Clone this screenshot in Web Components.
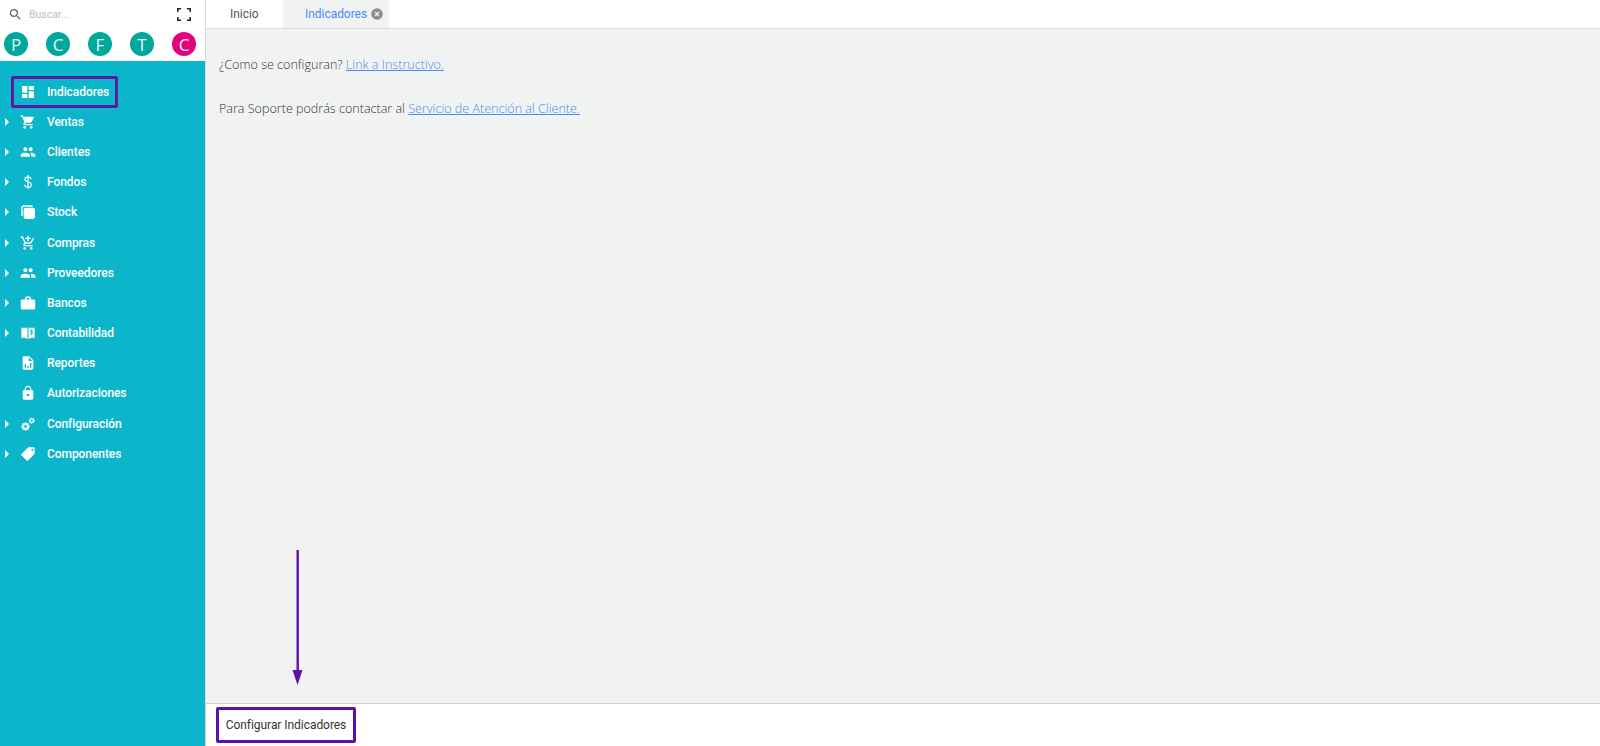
<!DOCTYPE html>
<html lang="es"><head><meta charset="utf-8"><title>Indicadores</title>
<style>
html,body{margin:0;height:100%;overflow:hidden;background:#fff;font-family:Roboto,sans-serif}
</style></head><body>
<app-shell>
  <side-bar slot="side">
    <nav-item label="Indicadores" icon="dash" highlight></nav-item>
    <nav-item label="Ventas" icon="cart" arrow></nav-item>
    <nav-item label="Clientes" icon="people" arrow></nav-item>
    <nav-item label="Fondos" icon="dollar" arrow></nav-item>
    <nav-item label="Stock" icon="stock" arrow></nav-item>
    <nav-item label="Compras" icon="cartplus" arrow></nav-item>
    <nav-item label="Proveedores" icon="people" arrow></nav-item>
    <nav-item label="Bancos" icon="case" arrow></nav-item>
    <nav-item label="Contabilidad" icon="book" arrow></nav-item>
    <nav-item label="Reportes" icon="report"></nav-item>
    <nav-item label="Autorizaciones" icon="lock"></nav-item>
    <nav-item label="Configuración" icon="gears" arrow></nav-item>
    <nav-item label="Componentes" icon="tag" arrow></nav-item>
  </side-bar>
  <main-panel slot="main"></main-panel>
</app-shell>
<script>
const ICONS={
dash:'<path d="M3 13h8V3H3zm0 8h8v-6H3zm10 0h8V11h-8zm0-18v6h8V3z"/>',
cart:'<path d="M7 18c-1.1 0-2 .9-2 2s.9 2 2 2 2-.9 2-2-.9-2-2-2zM1 2v2h2l3.6 7.6-1.35 2.4C4.52 15.37 5.48 17 7 17h12v-2H7.42a.25.25 0 0 1-.25-.25l.03-.12.9-1.63h7.45c.75 0 1.41-.41 1.75-1.03l3.58-6.49A1 1 0 0 0 20 4H5.21l-.94-2H1zm16 16c-1.1 0-2 .9-2 2s.9 2 2 2 2-.9 2-2-.9-2-2-2z"/>',
people:'<path d="M16 11c1.66 0 2.99-1.34 2.99-3S17.66 5 16 5s-3 1.34-3 3 1.34 3 3 3zm-8 0c1.66 0 2.99-1.34 2.99-3S9.66 5 8 5 5 6.34 5 8s1.34 3 3 3zm0 2c-2.33 0-7 1.17-7 3.5V19h14v-2.5C15 14.17 10.33 13 8 13zm8 0c-.29 0-.62.02-.97.05 1.16.84 1.97 1.97 1.97 3.45V19h6v-2.5c0-2.33-4.67-3.5-7-3.5z"/>',
dollar:'<path d="M16.6 7.6C16.3 5.6 14.6 4.3 12 4.3c-2.8 0-4.7 1.5-4.7 3.7 0 2.5 2.2 3.3 4.7 3.9 2.8.7 5 1.5 5 4.1 0 2.3-2.1 3.8-5 3.8-2.8 0-4.8-1.4-5.1-3.7M12 1.5v21" fill="none" stroke="#fff" stroke-width="1.7"/>',
stock:'<rect x="5.5" y="5.5" width="17" height="17" rx="3"/><path d="M3 18V6a3 3 0 0 1 3-3h13" fill="none" stroke="#fff" stroke-width="2"/>',
cartplus:'<path d="M11 9h2V6h3V4h-3V1h-2v3H8v2h3zM7 18c-1.1 0-1.99.9-1.99 2S5.9 22 7 22s2-.9 2-2-.9-2-2-2zm10 0c-1.1 0-1.99.9-1.99 2s.89 2 1.99 2 2-.9 2-2-.9-2-2-2zM7.17 14.75l.03-.12.9-1.63h7.45c.75 0 1.41-.41 1.75-1.03l3.86-7.01L19.42 4l-3.87 7H8.53L4.27 2H1v2h2l3.6 7.59-1.35 2.45C4.52 15.37 5.48 17 7 17h12v-2H7.42c-.13 0-.25-.11-.25-.25z"/>',
case:'<path d="M20 7h-4V5c0-1.1-.9-2-2-2h-4c-1.1 0-2 .9-2 2v2H4c-1.1 0-2 .9-2 2v10c0 1.1.9 2 2 2h16c1.1 0 2-.9 2-2V9c0-1.1-.9-2-2-2zm-6 0h-4V5h4z" transform="translate(12 12) scale(1.08) translate(-12 -12)"/>',
book:'<path d="M2 4h9.2v17L7 19H2zM12.8 4H22v15h-5l-4.2 2z"/><path d="M17.4 6.5v9M19.2 8.2h-2.5a1.1 1.1 0 0 0 0 2.4h1.4a1.2 1.2 0 0 1 0 2.4h-2.6" fill="none" stroke="#0bb6cb" stroke-width="1.2"/>',
report:'<path d="M14 2H6a2 2 0 0 0-2 2v16c0 1.1.9 2 2 2h12a2 2 0 0 0 2-2V8zM9 19H7v-5h2zm4 0h-2v-3h2zm4 0h-2v-7h2zM13 9V3.5L18.5 9z"/>',
lock:'<path d="M18 8h-1V6c0-2.76-2.24-5-5-5S7 3.24 7 6v2H6c-1.1 0-2 .9-2 2v10c0 1.1.9 2 2 2h12c1.1 0 2-.9 2-2V10c0-1.1-.9-2-2-2zm-6 9c-1.1 0-2-.9-2-2s.9-2 2-2 2 .9 2 2-.9 2-2 2zm3.1-9H8.9V6a3.1 3.1 0 0 1 6.2 0z"/>',
gears:'<g transform="translate(1 1) scale(.92)"><circle cx="8" cy="16" r="3.9" fill="none" stroke="#fff" stroke-width="3.2"/><path d="M8 9v2M8 21v2M1 16h2M13 16h2M3 11l1.4 1.4M11.6 19.6L13 21M3 21l1.4-1.4M11.6 12.4L13 11" stroke="#fff" stroke-width="2.2"/><circle cx="18" cy="6.5" r="2.9" fill="none" stroke="#fff" stroke-width="2.2"/><path d="M18 1.5v1.4M18 10.1v1.4M13 6.5h1.4M21.6 6.5H23M14.5 3l1 1M20.5 9l1 1M14.5 10l1-1M20.5 4l1-1" stroke="#fff" stroke-width="1.6"/></g>',
tag:'<path d="M21.41 11.58l-9-9C12.05 2.22 11.55 2 11 2H4c-1.1 0-2 .9-2 2v7c0 .55.22 1.05.59 1.42l9 9c.36.36.86.58 1.41.58s1.05-.22 1.41-.59l7-7c.37-.36.59-.86.59-1.41s-.23-1.06-.59-1.42zM5.5 7C4.67 7 4 6.33 4 5.5S4.67 4 5.5 4 7 4.67 7 5.5 6.33 7 5.5 7z" transform="rotate(90 12 12)"/>'
};
function def(name,html){customElements.define(name,class extends HTMLElement{connectedCallback(){if(this.shadowRoot)return;const r=this.attachShadow({mode:'open'});r.innerHTML=typeof html==='function'?html(this):html;}})}

def('app-shell',`<style>
:host{display:grid;grid-template-columns:206px 1fr;height:746px;width:1600px;position:relative}
</style><slot name="side"></slot><slot name="main"></slot>`);

def('search-head',`<style>
:host{display:block;height:61px;background:#fff;font-family:Roboto,sans-serif}
.top{display:flex;align-items:center;height:28px;padding:0 14px 0 8px}
.q{font-size:10.5px;color:#b9bdc2;margin-left:6px;flex:1}
.av{display:flex;justify-content:space-between;padding:4px 9px 0 4px}
</style>
<div class="top">
<svg width="15" height="15" viewBox="0 0 24 24" fill="#666"><path d="M15.5 14h-.79l-.28-.27A6.47 6.47 0 0 0 16 9.5 6.5 6.5 0 1 0 9.5 16c1.61 0 3.09-.59 4.23-1.57l.27.28v.79l5 4.99L20.49 19zm-6 0C7.01 14 5 11.99 5 9.5S7.01 5 9.5 5 14 7.01 14 9.5 11.99 14 9.5 14z"/></svg>
<span class="q">Buscar...</span>
<svg width="14" height="13" viewBox="0 0 14 13" fill="none" stroke="#222" stroke-width="1.5"><path d="M.8 4V.8H4M10 .8h3.2V4M.8 9v3.2H4M10 12.2h3.2V9"/></svg>
</div>
<div class="av"><round-badge>P</round-badge><round-badge>C</round-badge><round-badge>F</round-badge><round-badge>T</round-badge><round-badge pink>C</round-badge></div>`);

def('round-badge',`<style>
:host{display:flex;width:24px;height:24px;border-radius:50%;background:#00a79d;color:#e6f6f5;align-items:center;justify-content:center;font:400 17px "Open Sans",sans-serif}
:host([pink]){background:#e6007e}
</style><slot></slot>`);

def('side-bar',`<style>
:host{display:flex;flex-direction:column;height:746px;background:#0bb6cb;border-right:1px solid #d8d8d8;box-sizing:border-box;width:206px}
.list{display:block;padding-top:15.6px}
</style><search-head></search-head><div class="list"><slot></slot></div>`);

def('nav-item',el=>`<style>
:host{display:flex;align-items:center;height:30.2px;position:relative;font:500 12px Roboto,sans-serif;letter-spacing:-.07px;color:#fff}
.arrow{width:0;height:0;border-left:4.5px solid #fff;border-top:4px solid transparent;border-bottom:4px solid transparent;margin-left:5px}
.ic{position:absolute;left:20px;top:7px;width:16px;height:16px;display:block}
.lb{position:absolute;left:47px;top:0;line-height:30.2px;white-space:nowrap}
.box{position:absolute;left:11px;top:-1px;width:107px;height:32px;border:3px solid #5b1a9e;box-sizing:border-box;border-radius:2px}
</style>${el.hasAttribute('arrow')?'<span class="arrow"></span>':''}
<svg class="ic" viewBox="0 0 24 24" fill="#fff">${ICONS[el.getAttribute('icon')]}</svg>
<span class="lb">${el.getAttribute('label')}</span>
${el.hasAttribute('highlight')?'<span class="box"></span>':''}`);

def('tab-bar',`<style>
:host{display:flex;height:29px;box-sizing:border-box;border-bottom:1px solid #dcdcdc;background:#fff;font:400 12px Roboto,sans-serif;letter-spacing:-.04px}
.t{display:flex;align-items:center;height:28px;box-sizing:border-box}
.a{width:77px;padding-left:24px;color:#555}
.b{width:106px;padding-left:22px;background:#f1f3f3;color:#4a8af4;gap:4px}
.x{width:12px;height:12px;display:block}
</style><div class="t a">Inicio</div><div class="t b">Indicadores
<svg class="x" viewBox="0 0 12 12"><circle cx="6" cy="6" r="5.8" fill="#8d8d8d"/><path d="M4 4l4 4M8 4l-4 4" stroke="#f1f3f3" stroke-width="1.3"/></svg></div>`);

def('main-panel',`<style>
:host{display:flex;flex-direction:column;height:746px;position:relative;min-width:0}
.body{flex:1;background:#f1f3f3;padding:27px 13px 0;font:300 12.55px/17px "Open Sans",sans-serif;color:#333}
p{margin:0 0 27px}
a{color:#4a8af4;text-decoration:underline}
.foot{height:43px;box-sizing:border-box;border-top:1px solid #cfcfcf;background:#fff;padding:3px 0 0 10px}
.btn{display:flex;align-items:center;justify-content:center;width:140px;height:36px;box-sizing:border-box;border:3px solid #5b12a8;border-radius:2px;font:400 12px Roboto,sans-serif;letter-spacing:-.05px;color:#333}
.arrow{position:absolute;left:85px;top:550px;width:12px;height:135px}
</style>
<tab-bar></tab-bar>
<div class="body"><p>¿Como se configuran? <a href="#">Link a Instructivo.</a></p>
<p>Para Soporte podrás contactar al <a href="#">Servicio de Atención al Cliente.</a></p></div>
<div class="foot"><div class="btn">Configurar Indicadores</div></div>
<svg class="arrow" viewBox="0 0 12 135"><path d="M6.7 0v122" stroke="#5b12a8" stroke-width="2.4" fill="none"/><path d="M1.5 120h10L6.5 135z" fill="#5b12a8"/></svg>`);
</script>
</body></html>
